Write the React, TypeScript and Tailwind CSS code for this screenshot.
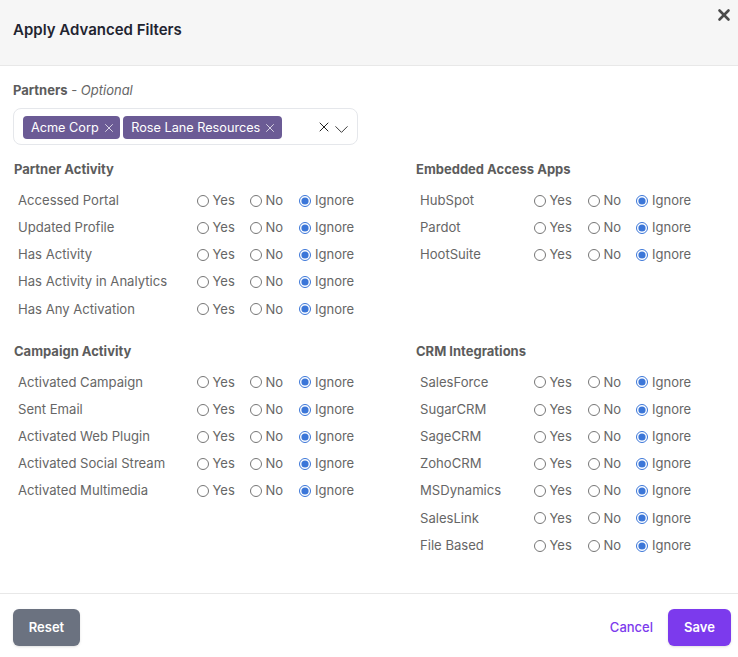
import { X, ChevronDown } from 'lucide-react';

interface RowWidths {
  label: string;
  yes: string;
  no: string;
}

const LEFT: RowWidths = { label: 'w-[182.5px]', yes: 'w-[53px]', no: 'w-[49px]' };
const RIGHT: RowWidths = { label: 'w-[117.5px]', yes: 'w-[54px]', no: 'w-[48px]' };

function FilterRow({ name, widths }: { name: string; widths: RowWidths }) {
  return (
    <div className="flex items-center h-[27.2px] text-[13px] text-[#666]">
      <span className={`pl-1 text-[13.1px] ${widths.label}`}>{name}</span>
      <label className={`flex items-center gap-1 ${widths.yes}`}>
        <input type="radio" name={name} className="w-3 h-3 m-0 accent-[#3b76d8]" />
        Yes
      </label>
      <label className={`flex items-center gap-1 ${widths.no}`}>
        <input type="radio" name={name} className="w-3 h-3 m-0 accent-[#3b76d8]" />
        No
      </label>
      <label className="flex items-center gap-[4.5px]">
        <input type="radio" name={name} defaultChecked className="w-3 h-3 m-0 accent-[#3b76d8]" />
        Ignore
      </label>
    </div>
  );
}

function FilterGroup({ title, items, widths }: { title: string; items: string[]; widths: RowWidths }) {
  return (
    <div>
      <h3 className="text-[13px] font-bold text-[#5c5c5c] leading-5 mb-2">{title}</h3>
      {items.map((item) => (
        <FilterRow key={item} name={item} widths={widths} />
      ))}
    </div>
  );
}

function Chip({ label }: { label: string }) {
  return (
    <span className="flex items-center mt-[2px] h-[23px] pl-2 pr-[4.5px] gap-[3px] rounded bg-[#6b5b95] text-white text-[12.7px]">
      {label}
      <X size={14} strokeWidth={1.25} />
    </span>
  );
}

export default function App() {
  return (
    <div className="w-[738px] h-[657px] bg-white flex flex-col font-['Inter',sans-serif] overflow-hidden">
      <header className="relative h-[66px] shrink-0 bg-[#f6f6f6] border-b border-[#e8e8e8] pl-[13px] pt-[20px]">
        <h2 className="text-[15px] font-semibold leading-5 text-[#1f2430]">Apply Advanced Filters</h2>
        <X size={18} strokeWidth={3.5} className="absolute top-[6px] right-[5px] text-[#4a4a4a]" />
      </header>

      <div className="flex-1 pt-[14px] pl-[13px]">
        <div className="text-[13px] leading-5 text-[#666]">
          <span className="font-bold text-[#5c5c5c]">Partners</span> - <em>Optional</em>
        </div>
        <div className="mt-2 w-[345px] h-[37px] rounded-lg border border-[#e5e7eb] flex items-center pl-[9px] pr-[4px]">
          <Chip label="Acme Corp" />
          <span className="w-[3px]" />
          <Chip label="Rose Lane Resources" />
          <X size={16} strokeWidth={1.5} className="ml-auto text-[#222]" />
          <ChevronDown size={23} strokeWidth={1} className="-ml-[2px] mt-[5px] text-[#333]" />
        </div>

        <div className="mt-[14px] ml-px grid grid-cols-[402px_1fr]">
          <div className="flex flex-col gap-[17.8px]">
            <FilterGroup
              title="Partner Activity"
              widths={LEFT}
              items={['Accessed Portal', 'Updated Profile', 'Has Activity', 'Has Activity in Analytics', 'Has Any Activation']}
            />
            <FilterGroup
              title="Campaign Activity"
              widths={LEFT}
              items={['Activated Campaign', 'Sent Email', 'Activated Web Plugin', 'Activated Social Stream', 'Activated Multimedia']}
            />
          </div>
          <div className="flex flex-col gap-[72.3px]">
            <FilterGroup title="Embedded Access Apps" widths={RIGHT} items={['HubSpot', 'Pardot', 'HootSuite']} />
            <FilterGroup
              title="CRM Integrations"
              widths={RIGHT}
              items={['SalesForce', 'SugarCRM', 'SageCRM', 'ZohoCRM', 'MSDynamics', 'SalesLink', 'File Based']}
            />
          </div>
        </div>
      </div>

      <footer className="h-[64px] shrink-0 border-t border-[#e8e8e8] flex items-start justify-between pt-[15px] pl-[13px] pr-[7px]">
        <button className="w-[67px] h-[37px] rounded-md bg-[#6b7280] text-white text-[13px] font-semibold shadow-sm">
          Reset
        </button>
        <div className="flex items-center">
          <button className="text-[13px] font-medium text-[#7c3aed] mr-[15px]">Cancel</button>
          <button className="w-[63px] h-[37px] rounded-md bg-[#7c3aed] text-white text-[13px] font-semibold shadow-sm">
            Save
          </button>
        </div>
      </footer>
    </div>
  );
}
